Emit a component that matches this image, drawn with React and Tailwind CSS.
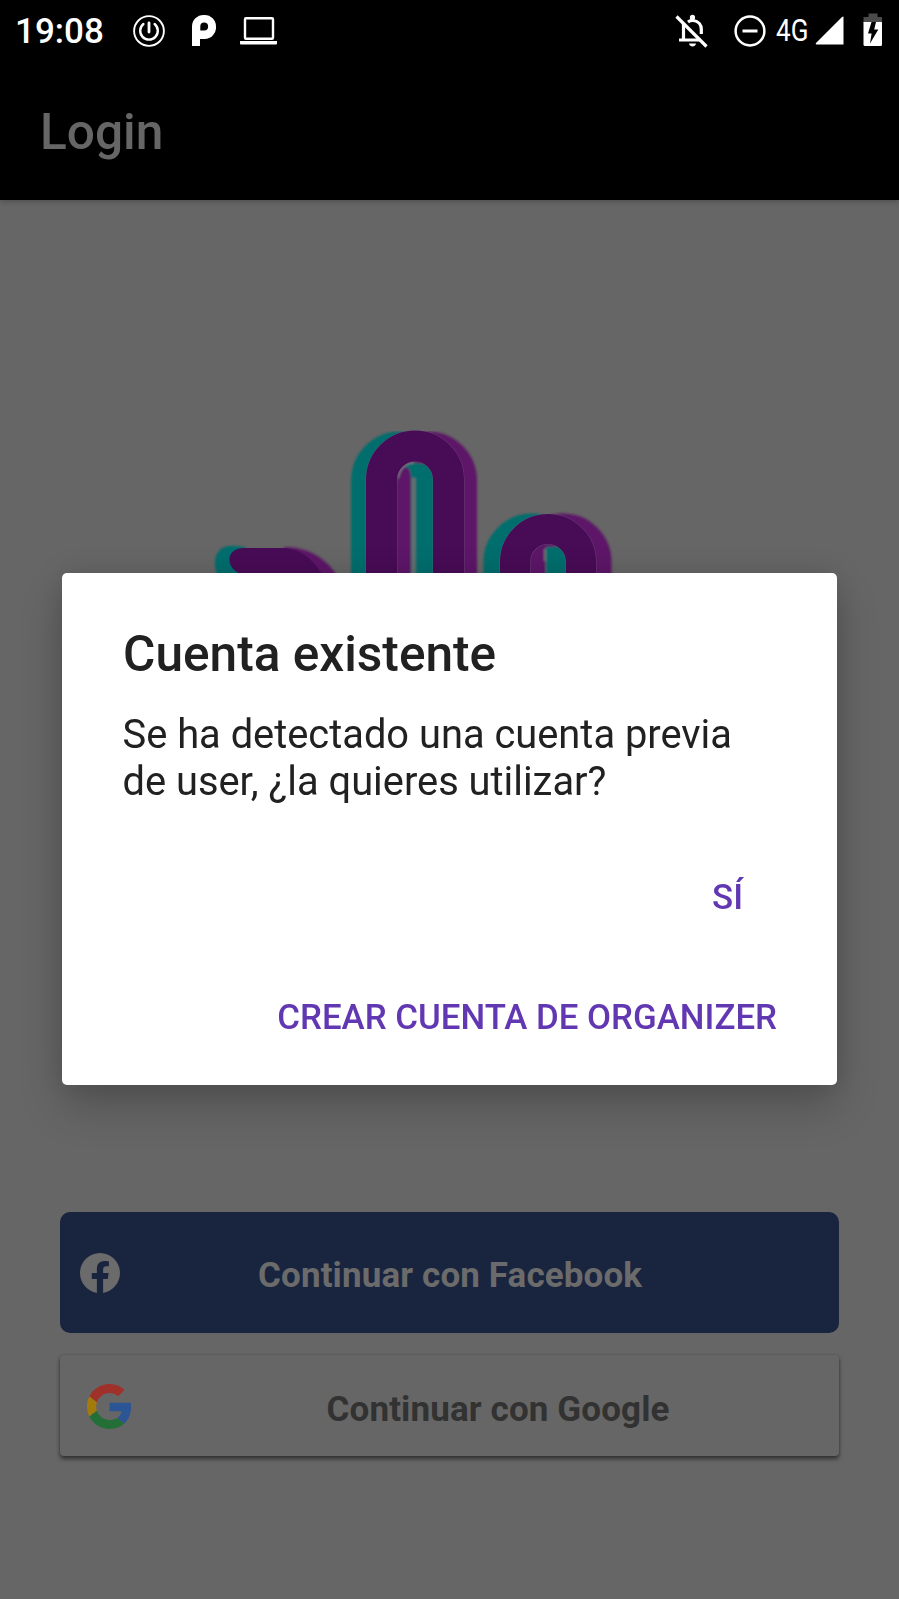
function StatusBar() {
  return (
    <div className="flex h-[61px] shrink-0 items-center text-white">
      <span className="mt-[2px] ml-[15px] w-[89px] whitespace-nowrap text-[35px] leading-[41px] font-medium">19:08</span>
      <svg className="ml-[29px] shrink-0" width="32" height="32" viewBox="0 0 32 32" fill="none" stroke="currentColor">
        <circle cx="16" cy="16" r="14.9" strokeWidth="1.9" />
        <path d="M10.4 9A8.8 8.8 0 1 0 21.6 9" strokeWidth="2.4" strokeLinecap="round" />
        <path d="M16 8v9" strokeWidth="2.8" strokeLinecap="round" />
      </svg>
      <svg className="ml-[27px] shrink-0" width="24" height="32" viewBox="0 0 24 32">
        <path
          fill="currentColor"
          fillRule="evenodd"
          d="M0 31V11.5A11.5 11.5 0 0 1 11.5 0h1A11.4 11.4 0 0 1 24 11.5 11.5 11.5 0 0 1 12.500 24H8V31ZM12.200 7.600a3.900 3.900 0 0 0-3.900 3.900V15.400H12.200a3.900 3.900 0 0 0 0-7.800Z"
        />
      </svg>
      <svg className="ml-[24px] shrink-0" width="38" height="28" viewBox="0 0 38 28">
        <rect x="5" y="1.200" width="28" height="20.500" rx="1" fill="none" stroke="currentColor" strokeWidth="2.400" />
        <path d="M0 24H37V26.500q0 1-1 1H1Q0 27.500 0 26.500Z" fill="currentColor" />
      </svg>
      <svg className="ml-[397px] shrink-0" width="34" height="34" viewBox="0 0 34 34" fill="none" stroke="currentColor">
        <path d="M8.500 9.500V26M4 26H26" strokeWidth="3.200" />
        <path d="M13 8C15 6.500 17 6.200 18.500 6.500C23.500 7.200 26.300 11 26.300 15V20" strokeWidth="3.200" />
        <circle cx="17.500" cy="3.400" r="2.600" fill="currentColor" stroke="none" />
        <path d="M14 29.500H21C20.500 33.500 14.500 33.500 14 29.500Z" fill="currentColor" stroke="none" />
        <path d="M1.500 2.500L31.500 32.500" strokeWidth="3.200" />
      </svg>
      <svg className="ml-[25px] shrink-0" width="32" height="32" viewBox="0 0 32 32" fill="none" stroke="currentColor">
        <circle cx="16" cy="16" r="14.400" strokeWidth="2.500" />
        <path d="M8.500 16H23.500" strokeWidth="3" />
      </svg>
      <span className="ml-[10px] w-[32px] whitespace-nowrap">
        <span className="inline-block origin-left scale-x-[0.84] text-[31px] leading-[36px]">4G</span>
      </span>
      <svg className="ml-[7px] shrink-0" width="29" height="29" viewBox="0 0 29 29">
        <path d="M28.500 0.500V28.500H1.500Q0 28 1 27L27 1Z" fill="currentColor" />
      </svg>
      <svg className="-mt-[2px] ml-[19px] shrink-0" width="20" height="34" viewBox="0 0 20 34">
        <path d="M5.500 0.500H14.500V4H19V10H0.500V4H5.500Z" fill="#4b4b4b" />
        <path d="M0.500 9H19V31.500Q19 33 17.500 33H2Q0.500 33 0.500 31.500Z" fill="currentColor" />
        <path d="M8.500 9H13L11.200 16.500H15.300L7 30.500L8.600 20.500H5Z" fill="#000" />
      </svg>
    </div>
  );
}

const handPaths = {
  thumb: "M244 548H282C300 548 313 559 323 576H252C225 576 222 548 244 548Z",
  middle: "M381.500 600V480A33.500 34 0 0 1 448.500 480V600",
  ring: "M515 600V562A33 33 0 0 1 581 562V600",
};

function HandLogo() {
  return (
    <svg width="440" height="160" viewBox="200 420 440 160" className="shrink-0">
      <defs>
        <filter id="soft" x="-10%" y="-10%" width="120%" height="120%">
          <feGaussianBlur stdDeviation="0.9" />
        </filter>
      </defs>
      <g filter="url(#soft)">
        <g fill="none" stroke="#066e6d" strokeWidth="31">
          <path d={handPaths.middle} transform="translate(-15 1)" />
          <path d={handPaths.ring} transform="translate(-16 0)" />
          <path d="M231 546C216 546 211 561 218 576H250V550C243 546 238 546 231 546Z" fill="#066e6d" stroke="none" />
        </g>
        <g fill="none" stroke="#5d1868" strokeWidth="31">
          <path d={handPaths.middle} transform="translate(13 1)" />
          <path d={handPaths.ring} transform="translate(15 0)" />
          <path d="M284 547C308 547 325 558 336 574V580H290Z" fill="#5d1868" stroke="none" />
        </g>
        <path d="M397 580V484Q398 462 416 463Q433 464 433 483V580Z" fill="#066e6d" />
        <path d="M397 580V484Q399 468 405 467Q411 467 411 480V580Z" fill="#5d1868" />
        <path d="M413.500 580V478" stroke="#66706f" strokeWidth="4" />
        <path d="M529 580V562Q532 547 544 546V580Z" fill="#5d1868" />
        <path d="M546 580V547Q564 545 566 561V580Z" fill="#066e6d" />
        <path d="M545 549V561" stroke="#707070" strokeWidth="2" />
        <path d="M398 478Q401 463 414 462.500" stroke="#858585" strokeWidth="1.500" fill="none" />
      </g>
      <g fill="none" stroke="#766981" strokeWidth="32" opacity="0.5">
        <path d={handPaths.middle} />
        <path d={handPaths.ring} strokeWidth="31" />
      </g>
      <g fill="none" stroke="#480b56" strokeWidth="31">
        <path d={handPaths.middle} />
        <path d={handPaths.ring} strokeWidth="30" />
        <path d={handPaths.thumb} fill="#480b56" stroke="none" />
      </g>
    </svg>
  );
}

function FacebookButton() {
  return (
    <button className="flex h-[121px] w-full items-center rounded-[10px] bg-[#19243f]">
      <svg className="ml-[20px] shrink-0" width="40" height="40" viewBox="0 0 24 24" fill="#6b6b6b">
        <path d="M24 12.073C24 5.446 18.627.073 12 .073S0 5.446 0 12.073c0 5.990 4.388 10.954 10.125 11.854v-8.385H7.078v-3.470h3.047V9.430c0-3.007 1.792-4.669 4.533-4.669 1.312 0 2.686.235 2.686.235v2.953H15.830c-1.491 0-1.956.925-1.956 1.874v2.250h3.328l-.532 3.470h-2.796v8.385C19.612 23.027 24 18.062 24 12.073z" />
      </svg>
      <span className="ml-[138px] mt-[6px] whitespace-nowrap text-[35px] leading-[41px] font-bold tracking-[0.12px] text-[#6b6b6b]">
        Continuar con Facebook
      </span>
    </button>
  );
}

function GoogleButton() {
  return (
    <button className="mt-[22px] flex h-[101px] w-full items-center rounded-[4px] bg-[#666] shadow-[0_3px_4px_rgba(0,0,0,0.5),0_0_2px_rgba(0,0,0,0.2)]">
      <svg className="mt-[2px] ml-[27px] shrink-0" width="45" height="45" viewBox="0 0 48 48">
        <path fill="#a0312a" d="M24 9.500c3.540 0 6.710 1.220 9.210 3.600l6.850-6.850C35.900 2.380 30.470 0 24 0 14.620 0 6.510 5.380 2.560 13.220l7.980 6.190C12.430 13.720 17.740 9.500 24 9.500z" />
        <path fill="#2c5595" d="M46.980 24.550c0-1.570-.150-3.090-.380-4.550H24v9.020h12.940c-.580 2.960-2.260 5.480-4.780 7.180l7.730 6c4.510-4.180 7.090-10.360 7.090-17.650z" />
        <path fill="#a37a0c" d="M10.530 28.590c-.480-1.450-.760-2.990-.760-4.590s.270-3.140.760-4.590l-7.980-6.190C.920 16.460 0 20.120 0 24c0 3.880.920 7.540 2.560 10.780l7.970-6.190z" />
        <path fill="#236f37" d="M24 48c6.480 0 11.930-2.130 15.890-5.810l-7.730-6c-2.150 1.450-4.920 2.300-8.160 2.300-6.260 0-11.570-4.220-13.470-9.910l-7.980 6.190C6.510 42.620 14.620 48 24 48z" />
      </svg>
      <span className="ml-[194.5px] mt-[7px] whitespace-nowrap text-[35px] leading-[41px] font-bold tracking-[0.12px] text-[#323232]">
        Continuar con Google
      </span>
    </button>
  );
}

function AccountDialog() {
  return (
    <div
      role="dialog"
      className="absolute top-[573px] left-[62px] flex h-[512px] w-[775px] flex-col rounded-[5px] bg-white px-[60px] pt-[52px] shadow-[0_22px_44px_rgba(0,0,0,0.2),0_0_30px_rgba(0,0,0,0.12)]"
    >
      <h2 className="ml-[1px] text-[49.6px] leading-[58px] font-medium whitespace-nowrap text-[#212121]">Cuenta existente</h2>
      <p className="mt-[28px] ml-[0.5px] text-[39.85px] leading-[47px] whitespace-nowrap text-[#212121]">
        Se ha detectado una cuenta previa
        <br />
        de user, ¿la quieres utilizar?
      </p>
      <div className="mt-[72px] flex flex-col items-end gap-[79px] text-[34.85px] leading-[41px] font-medium whitespace-nowrap text-[#6237b2]">
        <button className="mr-[34px]">SÍ</button>
        <button>CREAR CUENTA DE ORGANIZER</button>
      </div>
    </div>
  );
}

export default function App() {
  return (
    <div className="relative flex h-[1599px] w-[899px] flex-col overflow-hidden bg-[#666] font-[Roboto,sans-serif]">
      <header className="flex h-[200px] shrink-0 flex-col bg-black shadow-[0_2px_5px_rgba(0,0,0,0.2)]">
        <StatusBar />
        <h1 className="mt-[42px] ml-[40px] text-[49.6px] leading-[58px] font-medium text-[#666]">Login</h1>
      </header>
      <main className="flex flex-1 flex-col px-[60px]">
        <div className="flex h-[1012px] shrink-0 pt-[220px] pl-[140px]">
          <HandLogo />
        </div>
        <FacebookButton />
        <GoogleButton />
      </main>
      <AccountDialog />
    </div>
  );
}
